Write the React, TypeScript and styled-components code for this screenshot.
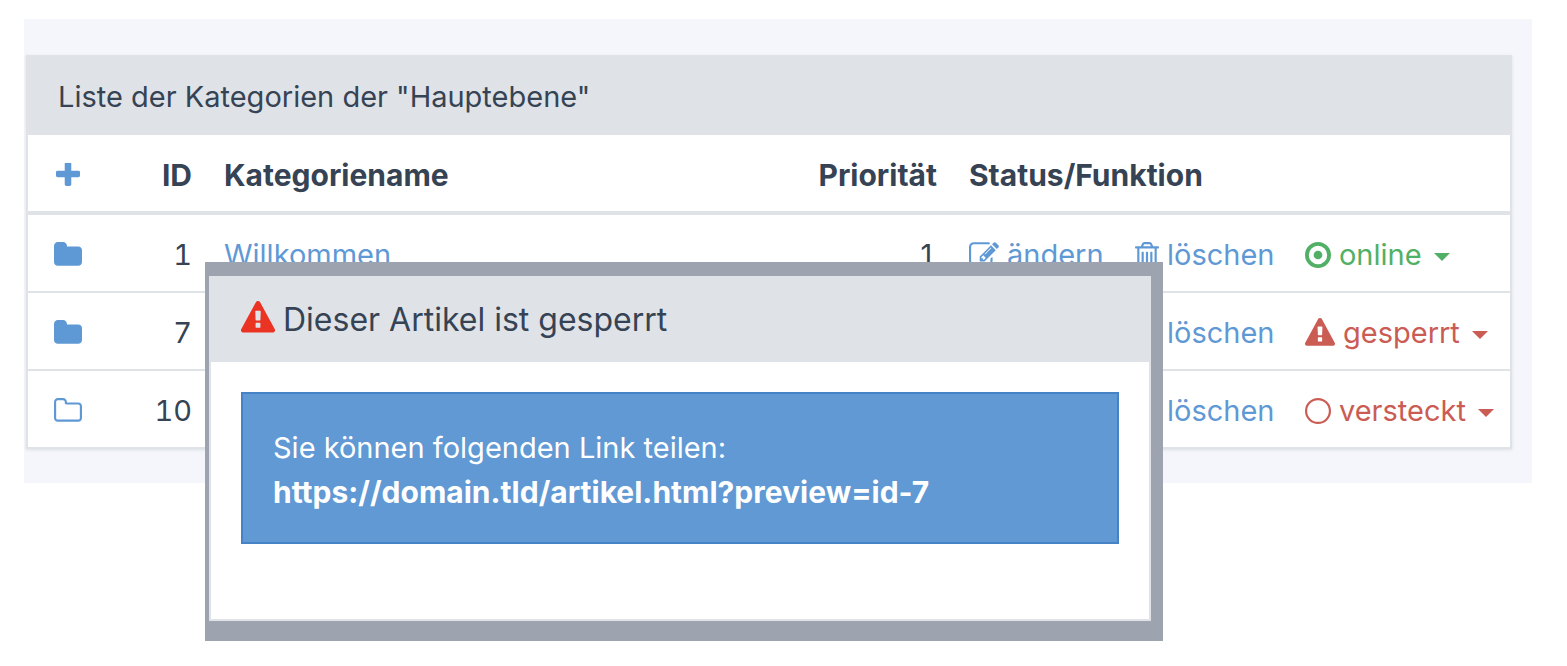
import React from "react";
import styled, { createGlobalStyle } from "styled-components";

const c = {
  text: "#364354",
  line: "#dfe3e8",
  blue: "#5f99d5",
  alert: "#6099d4",
  alertBorder: "#4583c6",
  green: "#52b066",
  red: "#ca5c54",
  backdrop: "#9da3af",
  page: "#f4f6fb",
};

const GlobalStyle = createGlobalStyle`
  *, *::before, *::after { box-sizing: border-box; }
  body {
    margin: 0;
    background: #fff;
    color: ${c.text};
    font: 29px/44px Inter, "Liberation Sans", sans-serif;
  }
`;

const Stage = styled.main`
  position: relative;
  min-height: 100vh;
  padding: 19px 35px 24px 24px;
`;

const Content = styled.div`
  background: ${c.page};
  padding: 36px 20px 34px 2px;
`;

const Panel = styled.section`
  background: #fff;
  border: 2px solid ${c.line};
  box-shadow: 0 1px 3px rgba(50, 64, 80, 0.12);
`;

const PanelHeader = styled.header`
  background: ${c.line};
  padding: 18px 30px 16px;
`;

const Table = styled.table`
  width: 100%;
  table-layout: fixed;
  border-collapse: separate;
  border-spacing: 0;
`;

const Col = styled.col<{ $width?: number }>`
  width: ${(p) => (p.$width ? `${p.$width}px` : "auto")};
`;

const HeadCell = styled.th<{ $align?: "left" | "right" }>`
  height: 80px;
  padding: 4px 16px 0;
  border-bottom: 4px solid ${c.line};
  font-size: 30px;
  font-weight: 700;
  text-align: ${(p) => p.$align ?? "left"};
  white-space: nowrap;
`;

const Cell = styled.td`
  height: 78px;
  padding: 2px 16px 0;
  border-bottom: 2px solid ${c.line};
  white-space: nowrap;

  tr:last-child > & {
    height: 76px;
    border-bottom: 0;
  }
`;

const NumberCell = styled(Cell)`
  padding-top: 4px;
  font-variant-numeric: tabular-nums;
  text-align: right;
`;

const IconHeadCell = styled(HeadCell)`
  padding: 0 26px 2px;
`;

const IconCell = styled(Cell)`
  padding: 0 26px;
`;

const Link = styled.a`
  display: inline-flex;
  align-items: center;
  gap: 8px;
  color: ${c.blue};
  text-decoration: none;
  vertical-align: middle;
`;

const IconLink = styled(Link)`
  justify-content: center;
  width: 28px;
`;

const StatusButton = styled.button<{ $color: string }>`
  display: inline-flex;
  align-items: center;
  gap: 8px;
  padding: 0;
  border: 0;
  background: none;
  color: ${(p) => p.$color};
  font: inherit;
  vertical-align: middle;
  cursor: pointer;
`;

const Caret = styled.span`
  margin: 4px 0 0 4px;
  border: 8px solid transparent;
  border-top-color: currentColor;
  border-bottom: 0;
`;

const Svg = styled.svg`
  flex: none;
  display: block;
  fill: currentColor;
`;

const Modal = styled.div`
  position: absolute;
  top: 262px;
  left: 205px;
  right: 404px;
  padding: 14px 12px 20px 4px;
  background: ${c.backdrop};
`;

const Dialog = styled.section`
  background: #fff;
  border: 2px solid ${c.line};
`;

const DialogTitle = styled.h2`
  display: flex;
  align-items: center;
  gap: 8px;
  margin: 0;
  padding: 20px 30px;
  background: ${c.line};
  font-size: 32px;
  font-weight: 400;
  line-height: 44px;
`;

const Warning = styled.span`
  padding-bottom: 4px;
  color: #eb3323;
`;

const DialogBody = styled.div`
  padding: 30px 30px 75px;
`;

const Alert = styled.p`
  margin: 0;
  padding: 32px 30px 28px;
  border: 2px solid ${c.alertBorder};
  background: ${c.alert};
  color: #fff;
`;

const ShareLink = styled.strong`
  display: block;
  font-size: 30px;
  font-weight: 700;
`;

const folderBox = { box: "64 128 1664 1536", w: 28, h: 26 };

const paths = {
  plus: {
    box: "192 192 1408 1408",
    w: 24,
    h: 24,
    d: "M1600 736v192q0 40-28 68t-68 28h-416v416q0 40-28 68t-68 28h-192q-40 0-68-28t-28-68v-416h-416q-40 0-68-28t-28-68v-192q0-40 28-68t68-28h416v-416q0-40 28-68t68-28h192q40 0 68 28t28 68v416h416q40 0 68 28t28 68z",
  },
  folder: {
    ...folderBox,
    d: "M1728 608v704q0 92-66 158t-158 66h-1216q-92 0-158-66t-66-158v-960q0-92 66-158t158-66h320q92 0 158 66t66 158v32h672q92 0 158 66t66 158z",
  },
  folderOpen: {
    ...folderBox,
    d: "M1600 1312v-704q0-40-28-68t-68-28h-704q-40 0-68-28t-28-68v-64q0-40-28-68t-68-28h-320q-40 0-68 28t-28 68v960q0 40 28 68t68 28h1216q40 0 68-28t28-68zm128-704v704q0 92-66 158t-158 66h-1216q-92 0-158-66t-66-158v-960q0-92 66-158t158-66h320q92 0 158 66t66 158v32h672q92 0 158 66t66 158z",
  },
  edit: {
    box: "0 128 1792 1536",
    w: 30,
    h: 26,
    d: "M888 1184l116-116-152-152-116 116v56h96v96h56zm440-720q-16-16-33 1l-350 350q-17 17-1 33t33-1l350-350q17-17 1-33zm80 594v190q0 119-84.5 203.5t-203.5 84.5h-832q-119 0-203.5-84.5t-84.5-203.5v-832q0-119 84.5-203.5t203.5-84.5h832q63 0 117 25 15 7 18 23 3 17-9 29l-49 49q-14 14-32 8-23-6-45-6h-832q-66 0-113 47t-47 113v832q0 66 47 113t113 47h832q66 0 113-47t47-113v-126q0-13 9-22l64-64q15-15 35-7t20 29zm-96-738l288 288-672 672h-288v-288zm444 132l-92 92-288-288 92-92q28-28 68-28t68 28l152 152q28 28 28 68t-28 68z",
  },
  trash: {
    box: "192 128 1408 1536",
    w: 24,
    h: 26,
    d: "M704 736v576q0 14-9 23t-23 9h-64q-14 0-23-9t-9-23v-576q0-14 9-23t23-9h64q14 0 23 9t9 23zm256 0v576q0 14-9 23t-23 9h-64q-14 0-23-9t-9-23v-576q0-14 9-23t23-9h64q14 0 23 9t9 23zm256 0v576q0 14-9 23t-23 9h-64q-14 0-23-9t-9-23v-576q0-14 9-23t23-9h64q14 0 23 9t9 23zm128 724v-948h-896v948q0 22 7 40.5t14.5 27 10.5 8.5h832q3 0 10.5-8.5t14.5-27 7-40.5zm-672-1076h448l-48-117q-7-9-17-11h-317q-10 2-17 11zm928 32v64q0 14-9 23t-23 9h-96v948q0 83-47 143.5t-113 60.5h-832q-66 0-113-58.5t-47-141.5v-952h-96q-14 0-23-9t-9-23v-64q0-14 9-23t23-9h309l70-167q15-37 54-63t79-26h320q40 0 79 26t54 63l70 167h309q14 0 23 9t9 23z",
  },
  warning: {
    box: "0 0 1792 1792",
    w: 30,
    h: 30,
    d: "M1024 1375v-190q0-14-9.5-23.5t-22.5-9.5h-192q-13 0-22.5 9.5t-9.5 23.5v190q0 14 9.5 23.5t22.5 9.5h192q13 0 22.5-9.5t9.5-23.5zm-2-374l18-459q0-12-10-19-13-11-24-11h-220q-11 0-24 11-10 7-10 21l17 457q0 10 10 16.5t24 6.5h185q14 0 23.5-6.5t10.5-16.5zm-14-934l768 1408q35 63-2 126-17 29-46.5 46t-63.5 17h-1536q-34 0-63.5-17t-46.5-46q-37-63-2-126l768-1408q17-31 47-49t65-18 65 18 47 49z",
  },
  online: {
    box: "0 0 1536 1536",
    w: 26,
    h: 26,
    d: "M1024 768a256 256 0 1 1-512 0a256 256 0 1 1 512 0zM768 224a544 544 0 1 0 0 1088a544 544 0 1 0 0-1088zM768 0a768 768 0 1 1 0 1536a768 768 0 1 1 0-1536z",
  },
  hidden: {
    box: "0 0 1536 1536",
    w: 26,
    h: 26,
    d: "M768 128a640 640 0 1 0 0 1280a640 640 0 1 0 0-1280zM768 0a768 768 0 1 1 0 1536a768 768 0 1 1 0-1536z",
  },
};

type IconName = keyof typeof paths;

function Icon({ name, size }: { name: IconName; size?: number }) {
  const { box, w, h, d } = paths[name];
  return (
    <Svg viewBox={box} width={size ?? w} height={size ?? h} aria-hidden="true">
      <path d={d} />
    </Svg>
  );
}

interface Category {
  id: number;
  name?: string;
  priority?: number;
  folder: IconName;
  status: string;
  statusIcon: IconName;
  statusColor: string;
}

const categories: Category[] = [
  { id: 1, name: "Willkommen", priority: 1, folder: "folder", status: "online", statusIcon: "online", statusColor: c.green },
  { id: 7, folder: "folder", status: "gesperrt", statusIcon: "warning", statusColor: c.red },
  { id: 10, folder: "folderOpen", status: "versteckt", statusIcon: "hidden", statusColor: c.red },
];

export default function App() {
  return (
    <>
      <GlobalStyle />
      <Stage>
        <Content>
          <Panel>
            <PanelHeader>Liste der Kategorien der "Hauptebene"</PanelHeader>
            <Table>
              <colgroup>
                <Col $width={80} />
                <Col $width={100} />
                <Col />
                <Col $width={152} />
                <Col $width={166} />
                <Col $width={170} />
                <Col $width={221} />
              </colgroup>
              <thead>
                <tr>
                  <IconHeadCell>
                    <IconLink href="#add" aria-label="Kategorie hinzufügen">
                      <Icon name="plus" />
                    </IconLink>
                  </IconHeadCell>
                  <HeadCell $align="right">ID</HeadCell>
                  <HeadCell>Kategoriename</HeadCell>
                  <HeadCell $align="right">Priorität</HeadCell>
                  <HeadCell colSpan={3}>Status/Funktion</HeadCell>
                </tr>
              </thead>
              <tbody>
                {categories.map((cat) => (
                  <tr key={cat.id}>
                    <IconCell>
                      <IconLink href={`#open-${cat.id}`} aria-label={`Kategorie ${cat.id} öffnen`}>
                        <Icon name={cat.folder} />
                      </IconLink>
                    </IconCell>
                    <NumberCell>{cat.id}</NumberCell>
                    <Cell>{cat.name && <Link href={`#category-${cat.id}`}>{cat.name}</Link>}</Cell>
                    <NumberCell>{cat.priority}</NumberCell>
                    <Cell>
                      <Link href={`#edit-${cat.id}`}>
                        <Icon name="edit" />
                        ändern
                      </Link>
                    </Cell>
                    <Cell>
                      <Link href={`#delete-${cat.id}`}>
                        <Icon name="trash" />
                        löschen
                      </Link>
                    </Cell>
                    <Cell>
                      <StatusButton type="button" aria-haspopup="menu" $color={cat.statusColor}>
                        <Icon name={cat.statusIcon} />
                        {cat.status}
                        <Caret />
                      </StatusButton>
                    </Cell>
                  </tr>
                ))}
              </tbody>
            </Table>
          </Panel>
        </Content>
        <Modal role="dialog" aria-labelledby="dialog-title">
          <Dialog>
            <DialogTitle id="dialog-title">
              <Warning>
                <Icon name="warning" size={34} />
              </Warning>
              Dieser Artikel ist gesperrt
            </DialogTitle>
            <DialogBody>
              <Alert>
                Sie können folgenden Link teilen:
                <ShareLink>https://domain.tld/artikel.html?preview=id-7</ShareLink>
              </Alert>
            </DialogBody>
          </Dialog>
        </Modal>
      </Stage>
    </>
  );
}
